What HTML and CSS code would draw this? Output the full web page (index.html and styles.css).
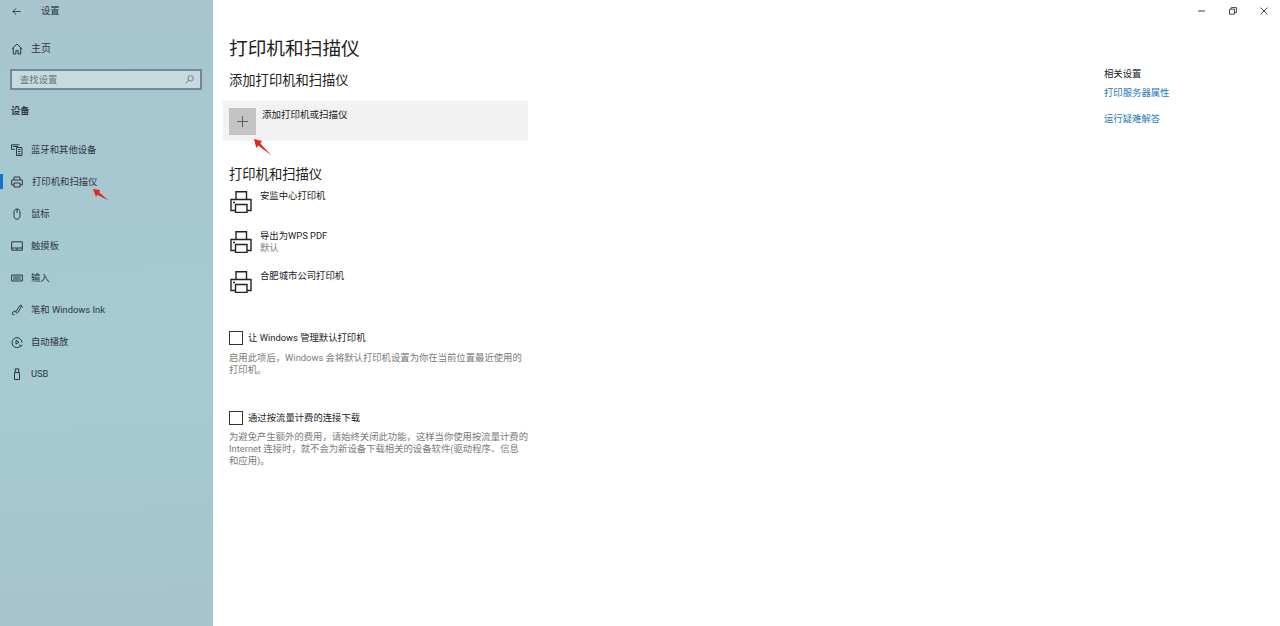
FILE: index.html
```html
<!DOCTYPE html>
<html lang="zh-CN">
<head>
  <meta charset="UTF-8">
  <title>设置</title>
  <link rel="stylesheet" href="styles.css">
</head>
<body>
  <aside class="sidebar">
    <div class="title-row">
      <svg class="back-icon" viewBox="0 0 10 10"><path d="M9.500 5H1M4.500 1.500 1 5l3.500 3.500"/></svg>
      <span>设置</span>
    </div>
    <div class="home-row">
      <svg class="nav-icon" viewBox="0 0 12 12"><path d="M.8 6 6 1l5.200 5M2.300 5v6h2.600V7.600h2.200V11h2.600V5"/></svg>
      <span>主页</span>
    </div>
    <div class="search">
      <span>查找设置</span>
      <svg class="search-icon" viewBox="0 0 10 10"><circle cx="6.300" cy="3.700" r="3"/><path d="M4.200 5.800.8 9.200"/></svg>
    </div>
    <div class="group-name">设备</div>
    <nav class="nav">
      <div class="nav-item">
        <svg class="nav-icon" viewBox="0 0 12 12"><path d="M.5 .8h8M.5 .8v4.500h3.500M5.500 3.500h5.500v8H5.500zM2 2.500h5M7 9.800h2.500M7 5.500h2.500M7 7.500h2.500"/></svg>
        <span>蓝牙和其他设备</span>
      </div>
      <div class="nav-item current">
        <svg class="nav-icon" viewBox="0 0 12 12"><path d="M3 4V1h6v3M3 9H.7V4h10.600v5H9M3 7h6v4H3z"/></svg>
        <span class="nav-label-shift">打印机和扫描仪</span>
        <svg class="arrow arrow-nav" viewBox="0 0 16 12"><path d="M0 0 7 1 6.200 3.200 15.500 11.500 4.300 5.800 3 8z"/></svg>
      </div>
      <div class="nav-item">
        <svg class="nav-icon" viewBox="0 0 12 12"><path d="M6 1v4M3 4.200C3 2 4.400 1 6 1s3 1 3 3.200v3.600C9 10 7.600 11.200 6 11.200S3 10 3 7.800z"/></svg>
        <span>鼠标</span>
      </div>
      <div class="nav-item">
        <svg class="nav-icon" viewBox="0 0 12 12"><path d="M.7 1.800h10.600v8.400H.7zM.7 8h10.600M6 8v2.200"/></svg>
        <span>触摸板</span>
      </div>
      <div class="nav-item">
        <svg class="nav-icon" viewBox="0 0 12 12"><path d="M.6 3h10.800v6H.6zM2.200 5h7.600M2.200 7h7.600"/></svg>
        <span>输入</span>
      </div>
      <div class="nav-item">
        <svg class="nav-icon" viewBox="0 0 12 12"><path d="M5 7.500 8.800 1.500c.6-.8 2-.2 1.600.8L7 8.500C6 10 4.600 9 5 7.500zM5 7.500C3.500 6.500 2 7.500 1.500 9s1 2.500 2 1.500M10 1 11.500 3.500"/></svg>
        <span>笔和 Windows Ink</span>
      </div>
      <div class="nav-item">
        <svg class="nav-icon" viewBox="0 0 12 12"><path d="M9.500 10.200A5 5 0 1 1 11 6.500M5 4.200v4l3-2zM11.500 9 9.500 10.500 8.500 8.500"/></svg>
        <span>自动播放</span>
      </div>
      <div class="nav-item">
        <svg class="nav-icon" viewBox="0 0 12 12"><path d="M3.500 4.500h5v7h-5zM4.300 4.500V.8h3.400v3.700M5.200 2.400h.1M6.800 2.400h.1"/></svg>
        <span>USB</span>
      </div>
    </nav>
  </aside>

  <main class="content">
    <h1>打印机和扫描仪</h1>
    <h2 class="sub-add">添加打印机和扫描仪</h2>
    <div class="add-row">
      <div class="add-tile">
        <svg class="plus-icon" viewBox="0 0 13 13"><path d="M6.500 0v13M0 6.500h13"/></svg>
      </div>
      <span>添加打印机或扫描仪</span>
      <svg class="arrow arrow-add" viewBox="0 0 18 17"><path d="M0 0 8 2 6.300 4.600 17.500 16.500 4.300 6.500 2.300 9z"/></svg>
    </div>
    <h2 class="sub-list">打印机和扫描仪</h2>
    <ul class="printers">
      <li>
        <svg class="printer-icon" viewBox="0 0 22 22"><path d="M6 8.500V.8h10.500v7.700M5.500 19.500H1V8.500h20v11h-4M5.500 13.500H17v8H5.500zM3 11.500h2"/></svg>
        <div><div>安监中心打印机</div></div>
      </li>
      <li>
        <svg class="printer-icon" viewBox="0 0 22 22"><path d="M6 8.500V.8h10.500v7.700M5.500 19.500H1V8.500h20v11h-4M5.500 13.500H17v8H5.500zM3 11.500h2"/></svg>
        <div><div>导出为WPS PDF</div><div class="muted">默认</div></div>
      </li>
      <li>
        <svg class="printer-icon" viewBox="0 0 22 22"><path d="M6 8.500V.8h10.500v7.700M5.500 19.500H1V8.500h20v11h-4M5.500 13.500H17v8H5.500zM3 11.500h2"/></svg>
        <div><div>合肥城市公司打印机</div></div>
      </li>
    </ul>
    <div class="option first">
      <div class="check-row"><span class="checkbox"></span><span>让 Windows 管理默认打印机</span></div>
      <p class="muted">启用此项后，Windows 会将默认打印机设置为你在当前位置最近使用的打印机。</p>
    </div>
    <div class="option second">
      <div class="check-row"><span class="checkbox"></span><span>通过按流量计费的连接下载</span></div>
      <p class="muted">为避免产生额外的费用，请始终关闭此功能，这样当你使用按流量计费的 Internet 连接时，就不会为新设备下载相关的设备软件(驱动程序、信息<br>和应用)。</p>
    </div>
  </main>

  <section class="side-panel">
    <div class="window-controls">
      <svg viewBox="0 0 8 8"><path d="M0 4h7"/></svg>
      <svg viewBox="0 0 8 8"><path d="M.5 2.200h5v5h-5zM2.200 2V.6h5.200v5H5.700"/></svg>
      <svg viewBox="0 0 8 8"><path d="M.5.500l7 7M7.500.500l-7 7"/></svg>
    </div>
    <div class="related">
      <div class="related-title">相关设置</div>
      <a class="link">打印服务器属性</a>
      <a class="link link-gap">运行疑难解答</a>
    </div>
  </section>
</body>
</html>
```

FILE: styles.css
```css
* {
  box-sizing: border-box;
}

html, body {
  height: 100%;
}

body {
  margin: 0;
  display: flex;
  overflow: hidden;
  background-color: #fff;
  color: #222;
  font-family: Roboto, "Noto Sans CJK SC", sans-serif;
  font-size: 9.350px;
  line-height: 12px;
}

svg {
  fill: none;
  stroke: currentColor;
  stroke-width: 1;
  flex-shrink: 0;
}

.sidebar {
  width: 213px;
  flex-shrink: 0;
  background: linear-gradient(178deg, #a8c5cf 0%, #a6cbd3 62%, #a7c3cb 100%);
  color: #2b383d;
}

.title-row {
  display: flex;
  align-items: center;
  height: 22px;
  padding-left: 12px;
}

.back-icon {
  width: 9px;
  height: 9px;
  margin-right: 20px;
}

.home-row {
  display: flex;
  align-items: center;
  gap: 8px;
  height: 16px;
  margin-top: 19px;
  padding-left: 11px;
  font-size: 10px;
}

.nav-icon {
  width: 12px;
  height: 12px;
}

.search {
  display: flex;
  align-items: center;
  justify-content: space-between;
  width: 192px;
  height: 21px;
  margin: 12px 0 0 10px;
  padding: 0 6px 0 8px;
  background-color: #c5dbe1;
  border: 2px solid #73888f;
  color: #62777d;
}

.search-icon {
  width: 9px;
  height: 9px;
}

.group-name {
  margin: 15px 0 0 11px;
  font-weight: 700;
}

.nav {
  margin-top: 17px;
}

.nav-item {
  position: relative;
  display: flex;
  align-items: center;
  gap: 8px;
  height: 32px;
  padding-left: 11px;
}

.nav-label-shift {
  margin-left: 1px;
}

.nav-item.current::before {
  content: "";
  position: absolute;
  left: 0;
  top: 8px;
  width: 3px;
  height: 15px;
  background-color: #1273c9;
}

.arrow {
  position: absolute;
  fill: #e3291f;
  stroke: none;
}

.arrow-nav {
  left: 93px;
  top: 23px;
  width: 16px;
  height: 12px;
}

.content {
  width: 315px;
  flex-shrink: 0;
  padding-left: 16px;
}

h1 {
  margin: 36px 0 0;
  font-size: 18.700px;
  font-weight: 400;
  line-height: 26px;
}

h2 {
  font-size: 13.300px;
  font-weight: 400;
  line-height: 18px;
}

.sub-add {
  margin: 10px 0 0;
}

.add-row {
  position: relative;
  display: flex;
  align-items: flex-start;
  gap: 6px;
  width: 305px;
  height: 40px;
  margin: 11px 0 0 -6px;
  padding: 7px 0 0 6px;
  background-color: #f2f2f2;
  font-size: 9.500px;
}

.add-row span {
  margin-top: 1px;
}

.add-tile {
  display: flex;
  align-items: center;
  justify-content: center;
  width: 27px;
  height: 27px;
  background-color: #c4c4c4;
}

.plus-icon {
  width: 11px;
  height: 11px;
  color: #4d4d4d;
}

.arrow-add {
  left: 31px;
  top: 38px;
  width: 18px;
  height: 17px;
}

.sub-list {
  margin: 25px 0 0;
}

.printers {
  list-style: none;
  margin: 6px 0 0;
  padding: 0;
}

.printers li {
  display: flex;
  gap: 8px;
  height: 40px;
}

.printer-icon {
  width: 22px;
  height: 22px;
  margin: 1px 0 0 1px;
  stroke-width: 1.400;
  color: #222;
}

.muted {
  color: #7a7a7a;
}

.option p {
  margin: 7px 0 0;
  width: 300px;
}

.first {
  margin-top: 21px;
}

.second {
  margin-top: 35px;
}

.second p {
  margin-top: 6px;
}

.check-row {
  display: flex;
  align-items: center;
  gap: 5px;
}

.checkbox {
  width: 14px;
  height: 14px;
  border: 1.500px solid #333;
}

.side-panel {
  flex: 1;
  padding-left: 576px;
}

.window-controls {
  display: flex;
  justify-content: flex-end;
  gap: 23px;
  height: 68px;
  padding: 7px 12px 0 0;
  color: #444;
}

.window-controls svg {
  width: 8px;
  height: 8px;
}

.related-title {
  color: #222;
}

.link {
  display: block;
  margin-top: 7px;
  color: #1f78b4;
}

.link-gap {
  margin-top: 14px;
}
```
